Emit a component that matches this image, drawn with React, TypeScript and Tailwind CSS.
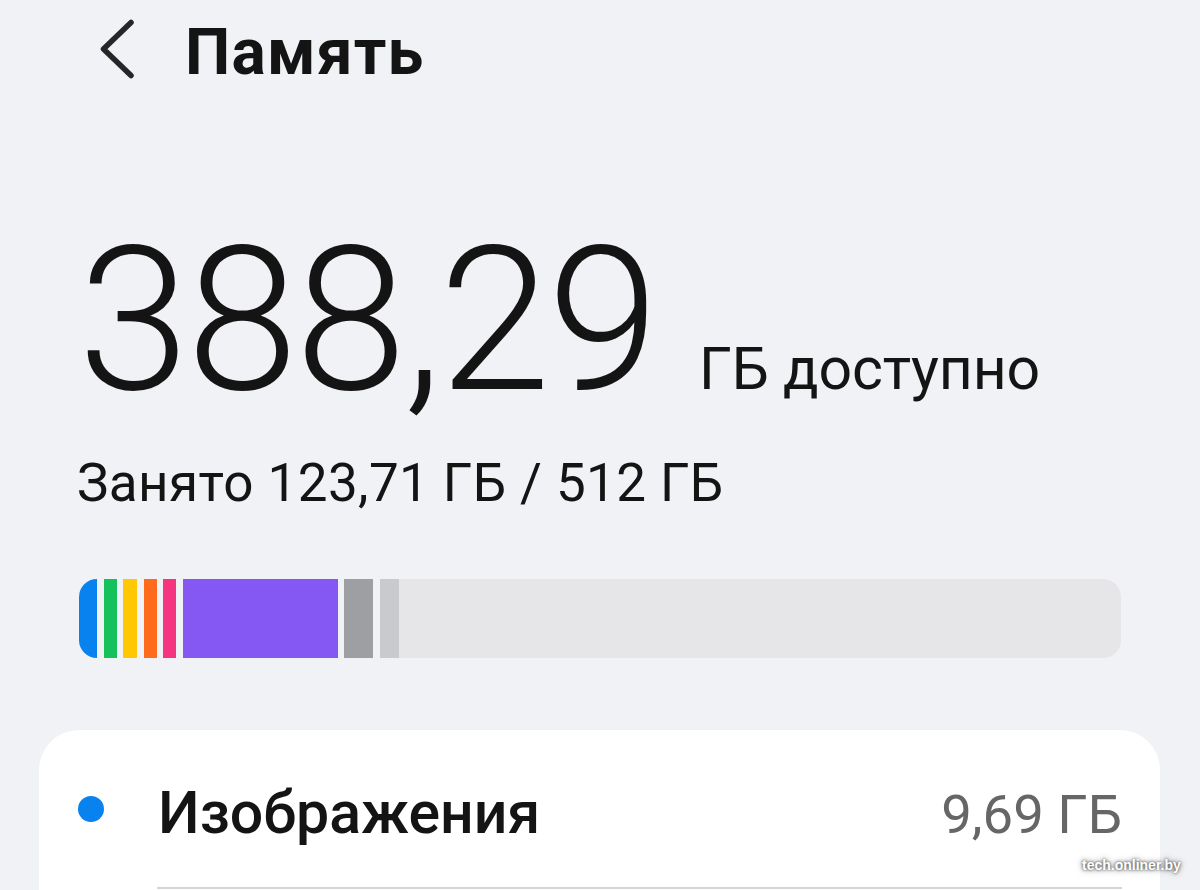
import React from "react";

const segs = [
  { w: 18, c: "bg-[#0882ee]" },
  { w: 13, c: "bg-[#14c15a]" },
  { w: 14, c: "bg-[#ffc802]" },
  { w: 13, c: "bg-[#ff6b1c]" },
  { w: 13, c: "bg-[#f5357f]" },
  { w: 155, c: "bg-[#8557f3]" },
  { w: 29, c: "bg-[#9e9fa3]" },
  { w: 19, c: "bg-[#c9cacd]" },
];

export default function App() {
  return (
    <div
      className="relative w-[1200px] h-[890px] overflow-hidden bg-[#f1f2f6] text-[#141414]"
      style={{ fontFamily: "Roboto, 'Noto Sans', sans-serif" }}
    >
      {/* Header */}
      <div className="flex items-start pt-[19px] pl-[100px]">
        <svg width="36" height="60" viewBox="0 0 36 60" className="shrink-0">
          <polyline
            points="31,3.5 3.5,30 31,56.5"
            fill="none"
            stroke="#262626"
            strokeWidth="5.5"
            strokeLinecap="round"
            strokeLinejoin="round"
          />
        </svg>
        <div className="ml-[49px] mt-[2px] text-[64px] leading-none font-bold tracking-[1.2px]">
          Память
        </div>
      </div>

      {/* Big number */}
      <div className="mt-[135px] flex items-baseline pl-[78px]">
        <span className="text-[201px] leading-none font-light tracking-[-3px]">388,29</span>
        <span className="ml-[43px] text-[59px] leading-none tracking-[-0.2px]">ГБ доступно</span>
      </div>

      {/* Used */}
      <div className="mt-[36px] pl-[77px] text-[53px] leading-none tracking-[0.4px]">
        Занято 123,71 ГБ / 512 ГБ
      </div>

      {/* Bar */}
      <div className="mt-[69px] ml-[79px] w-[1042px] h-[79px] rounded-[18px] overflow-hidden flex bg-[#f1f2f6]">
        {segs.map((s, i) => (
          <div
            key={i}
            className={`${s.c} h-full shrink-0`}
            style={{ width: s.w, marginRight: i < segs.length - 1 ? 6.5 : 0 }}
          />
        ))}
        <div className="flex-1 h-full bg-[#e6e6e8]" />
      </div>

      {/* Card */}
      <div className="mt-[72px] ml-[39px] w-[1121px] h-[300px] bg-white rounded-[40px] pt-[53px] pl-[39px] pr-[38px]">
        <div className="flex items-baseline">
          <div className="w-[26px] h-[26px] rounded-full bg-[#0882ee] shrink-0 self-start mt-[13px]" />
          <div className="ml-[54px] text-[59px] leading-none font-medium">Изображения</div>
          <div className="ml-auto text-[54.5px] leading-none text-[#666666]">9,69 ГБ</div>
        </div>
        <div className="mt-[45px] ml-[79px] h-[1.5px] bg-[#d4d4d6]" />
      </div>

      {/* Watermark */}
      <div
        className="absolute left-[1082px] top-[858px] text-[14px] leading-none font-bold text-white whitespace-nowrap"
        style={{
          fontFamily: "'Liberation Sans', Arial, sans-serif",
          textShadow: "0 0 3px rgba(0,0,0,0.75), 0 0 6px rgba(0,0,0,0.5)",
        }}
      >
        tech.onliner.by
      </div>
    </div>
  );
}
